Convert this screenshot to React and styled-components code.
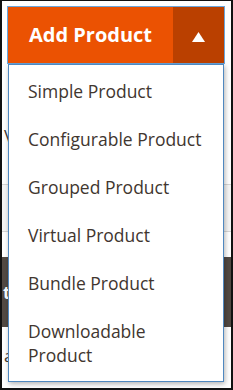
import React from 'react'
import styled, { createGlobalStyle } from "styled-components";

const GlobalStyle = createGlobalStyle`
  html, body {
    margin: 0;
    padding: 0;
    background: #fff;
  }
  body {
    font-family: "Open Sans", "Liberation Sans", sans-serif;
  }
`;

const items = [
  "Simple Product",
  "Configurable Product",
  "Grouped Product",
  "Virtual Product",
  "Bundle Product",
  "Downloadable Product",
];

const App = () => {
  return (
    <>
      <GlobalStyle />
      <StFrame>
        <StPage>
          <StGap $h={124} />
          <StPageText>View</StPageText>
          <StGap $h={37} />
          <StGreyRow />
          <StGap $h={25} />
          <StDarkBar>
            <StBarText>t</StBarText>
          </StDarkBar>
          <StGap $h={18} />
          <StPageText>ab</StPageText>
        </StPage>

        <StWidget>
          <StSplit>
            <StMainButton>Add Product</StMainButton>
            <StToggle>
              <svg width="13" height="10" viewBox="0 0 13 10">
                <path d="M6.5 0 L13 10 L0 10 Z" fill="#fff" />
              </svg>
            </StToggle>
          </StSplit>
          <StMenu>
            {items.map((item) => (
              <StItem key={item}>{item}</StItem>
            ))}
          </StMenu>
        </StWidget>
      </StFrame>
    </>
  )
}

export default App;

const StFrame = styled.div`
  position: relative;
  box-sizing: border-box;
  width: 233px;
  height: 390px;
  overflow: hidden;
  border-style: solid;
  border-color: #111;
  border-width: 1px 2px 2px 2px;
  background: #fff;
`;

const StPage = styled.div`
  display: flex;
  flex-direction: column;
  height: 100%;
`;

const StGap = styled.div`
  height: ${(p) => p.$h}px;
  flex-shrink: 0;
`;

const StPageText = styled.div`
  width: 5px;
  overflow: hidden;
  white-space: nowrap;
  padding-left: 2px;
  font-size: 17px;
  line-height: 22px;
  color: #41362f;
`;

const StGreyRow = styled.div`
  height: 46px;
  background: #f5f5f5;
  border-top: 1px solid #d6d6d6;
  border-bottom: 1px solid #d6d6d6;
`;

const StDarkBar = styled.div`
  height: 70px;
  background: #514943;
  display: flex;
  align-items: center;
`;

const StBarText = styled.span`
  padding-left: 1px;
  color: #fff;
  font-weight: 700;
  font-size: 17px;
`;

const StWidget = styled.div`
  position: absolute;
  top: 5px;
  left: 5px;
  width: 218px;
`;

const StSplit = styled.div`
  display: flex;
  height: 56px;
  border: 1px solid #6aa6dc;
`;

const StMainButton = styled.button`
  flex: 1;
  border: 0;
  margin: 0;
  padding: 0 0 2px;
  background: #eb5202;
  color: #fff;
  font-family: "Open Sans", "Liberation Sans", sans-serif;
  font-weight: 700;
  font-size: 20px;
  cursor: pointer;
`;

const StToggle = styled.button`
  width: 51px;
  border: 0;
  margin: 0;
  padding: 4px 0 0;
  background: #ba4000;
  display: flex;
  align-items: center;
  justify-content: center;
  cursor: pointer;
`;

const StMenu = styled.div`
  margin: 0 1px;
  padding: 2px 0;
  background: #fff;
  border: 1px solid #4f88c0;
  box-shadow: 1px 2px 5px rgba(0, 0, 0, 0.3);
`;

const StItem = styled.div`
  padding: 12px 20px 12px 19px;
  font-size: 17.5px;
  line-height: 24px;
  color: #41362f;
`;
